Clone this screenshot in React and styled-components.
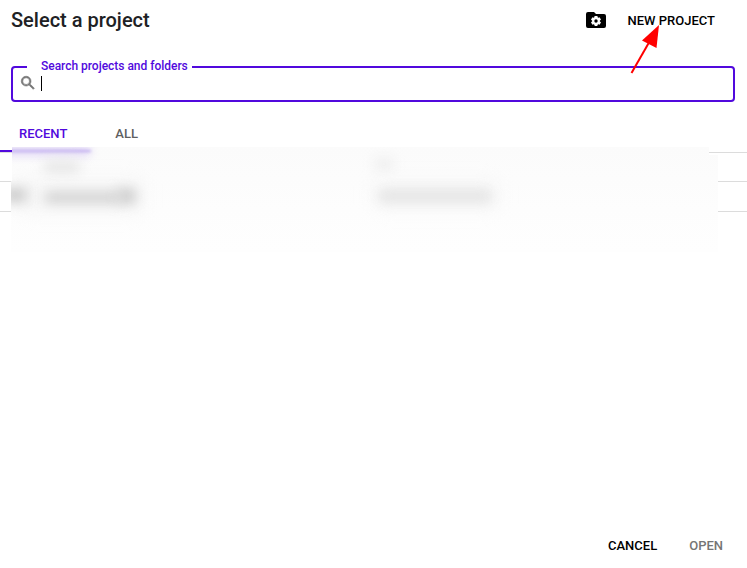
import React from 'react';
import styled, { createGlobalStyle } from 'styled-components';

const GlobalStyle = createGlobalStyle`
  * { box-sizing: border-box; }
  body { margin: 0; background: #fff; font-family: Roboto, sans-serif; }
`;

const Dialog = styled.main`
  position: relative;
  display: flex;
  flex-direction: column;
  height: 568px;
  overflow: hidden;
  background: #fff;
`;

const Header = styled.header`
  display: flex;
  align-items: center;
  height: 40px;
  padding: 0 32px 0 11px;
`;

const Title = styled.h1`
  flex: 1;
  margin: 0;
  font-size: 20px;
  line-height: 24px;
  font-weight: 500;
  color: #202124;
`;

const TextButton = styled.button`
  border: 0;
  padding: ${(p) => (p.$lowered ? '2px 0 0' : '0')};
  background: none;
  font: 500 13px/20px Roboto, sans-serif;
  color: ${(p) => (p.$muted ? '#757575' : '#000')};
`;

const FolderIcon = styled.svg`
  width: 24px;
  height: 24px;
  margin-right: 20px;
`;

const SearchField = styled.div`
  display: flex;
  position: relative;
  height: 36px;
  margin: 26px 12px 0 11px;
  padding: 0 0 0 8px;
  border: 2px solid #5109dd;
  border-radius: 4px;
  align-items: center;
`;

const FieldLabel = styled.span`
  position: absolute;
  top: -10px;
  left: 14px;
  padding: 0 4px 0 14px;
  background: #fff;
  font-size: 12px;
  line-height: 16px;
  font-weight: 500;
  letter-spacing: -0.02px;
  color: #5109dd;
`;

const SearchIcon = styled.svg`
  position: relative;
  width: 18px;
  height: 18px;
  margin-top: -2px;
  margin-left: -2px;
`;

const Caret = styled.span`
  width: 1px;
  height: 15px;
  margin: -2px 0 0 4px;
  background: #000;
`;

const Tabs = styled.nav`
  display: flex;
  height: 51px;
  border-bottom: 1px solid #dcdcdc;
`;

const Tab = styled.div`
  height: 50px;
  padding: 22px 24px 0 ${(p) => (p.$active ? 19 : 24)}px;
  border-bottom: 2px solid ${(p) => (p.$active ? '#5109dd' : 'transparent')};
  font-size: 13px;
  line-height: 20px;
  font-weight: 500;
  color: ${(p) => (p.$active ? '#5109dd' : '#5f5f5f')};
`;

const Row = styled.div`
  height: ${(p) => p.$height}px;
  border-bottom: 1px solid #dcdcdc;
`;

const Footer = styled.footer`
  display: flex;
  justify-content: flex-end;
  gap: 32px;
  margin-top: auto;
  padding: 0 24px 12px;
`;

const Redaction = styled.div`
  position: absolute;
  left: 11px;
  top: 147px;
  width: 707px;
  height: 105px;
  overflow: hidden;
  background: linear-gradient(#fbfbfb, #fdfdfd 60%, #fefefe);
  clip-path: polygon(1px 0, 698px 0, 698px 8px, 707px 8px, 707px 100%, 0 100%, 0 34px, 1px 34px);
`;

const Smudge = styled.span`
  position: absolute;
  left: ${(p) => p.$x}px;
  top: ${(p) => p.$y}px;
  width: ${(p) => p.$w}px;
  height: ${(p) => p.$h}px;
  border-radius: 4px;
  background: ${(p) => p.$tone};
  filter: blur(${(p) => p.$blur || 6}px);
`;

const Arrow = styled.svg`
  position: absolute;
  left: 625px;
  top: 22px;
  width: 40px;
  height: 56px;
`;

export default function App() {
  return (
    <Dialog>
      <GlobalStyle />
      <Header>
        <Title>Select a project</Title>
        <FolderIcon viewBox="0 0 24 24" aria-hidden="true">
          <path d="M4 4h6l2 2h8a2 2 0 0 1 2 2v10a2 2 0 0 1-2 2H4a2 2 0 0 1-2-2V6a2 2 0 0 1 2-2z" />
          <g transform="translate(12 13)" fill="#fff">
            {[0, 60, 120].map((a) => (
              <rect key={a} x="-1.5" y="-5" width="3" height="10" rx=".4" transform={`rotate(${a})`} />
            ))}
            <circle r="3.9" />
            <circle r="1.7" fill="#000" />
          </g>
        </FolderIcon>
        <TextButton $lowered>NEW PROJECT</TextButton>
      </Header>
      <SearchField>
        <FieldLabel>Search projects and folders</FieldLabel>
        <SearchIcon viewBox="0 0 24 24" fill="#757575" stroke="#757575" strokeWidth=".8" aria-hidden="true">
          <path d="M15.5 14h-.79l-.28-.27A6.47 6.47 0 0 0 16 9.5 6.5 6.5 0 1 0 9.5 16c1.61 0 3.09-.59 4.23-1.57l.27.28v.79l5 4.99L20.49 19l-4.99-5zm-6 0a4.5 4.5 0 1 1 0-9 4.5 4.5 0 0 1 0 9z" />
        </SearchIcon>
        <Caret />
      </SearchField>
      <Tabs>
        <Tab $active>RECENT</Tab>
        <Tab>ALL</Tab>
      </Tabs>
      <Row $height={29} />
      <Row $height={30} />
      <Redaction>
        <Smudge $x={-10} $y={0} $w={90} $h={8} $tone="#dcd0f6" $blur={5} />
        <Smudge $x={-4} $y={3} $w={84} $h={2} $tone="#bda9ef" $blur={1.5} />
        <Smudge $x={10} $y={34} $w={120} $h={30} $tone="#f5f5f5" $blur={9} />
        <Smudge $x={33} $y={14} $w={36} $h={12} $tone="#e6e6e6" />
        <Smudge $x={-8} $y={40} $w={24} $h={16} $tone="#d0d0d0" />
        <Smudge $x={34} $y={45} $w={75} $h={11} $tone="#d2d2d2" />
        <Smudge $x={106} $y={41} $w={19} $h={16} $tone="#d0d0d0" />
        <Smudge $x={363} $y={10} $w={20} $h={14} $tone="#f0f0f0" />
        <Smudge $x={364} $y={36} $w={122} $h={24} $tone="#f5f5f5" $blur={9} />
        <Smudge $x={368} $y={43} $w={112} $h={12} $tone="#e4e4e4" />
      </Redaction>
      <Footer>
        <TextButton>CANCEL</TextButton>
        <TextButton $muted>OPEN</TextButton>
      </Footer>
      <Arrow viewBox="0 0 40 56" aria-hidden="true">
        <path d="M6.5 51L26 17" stroke="#f00" strokeWidth="2" />
        <path d="M34 3L17 18.5L31.5 26z" fill="#f00" />
      </Arrow>
    </Dialog>
  );
}
